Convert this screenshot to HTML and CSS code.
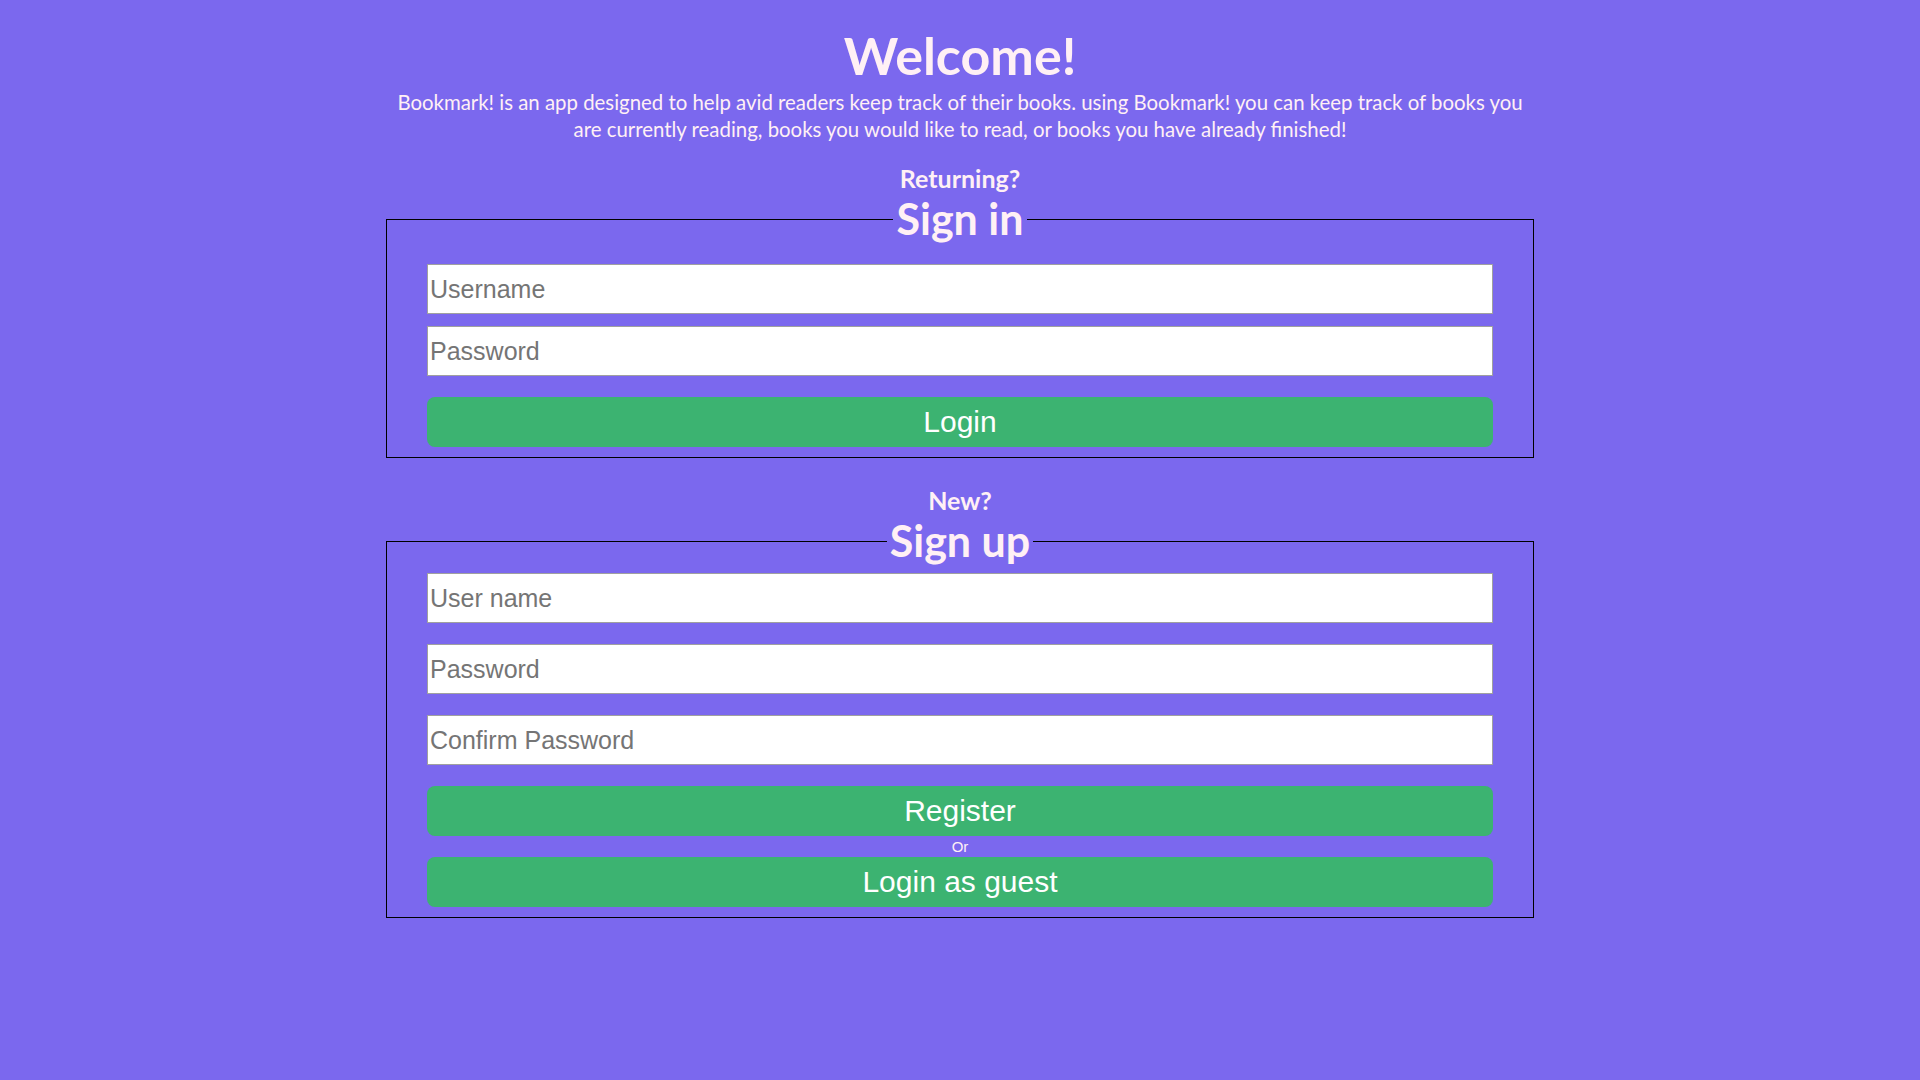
FILE: index.html
```html
<!DOCTYPE html>
<html lang="en">
<head>
<meta charset="utf-8">
<title>Bookmark! - Welcome</title>
<link rel="stylesheet" href="styles.css">
</head>
<body>
<main class="page">
  <h1 class="title">Welcome!</h1>
  <p class="intro">Bookmark! is an app designed to help avid readers keep track of their books. using Bookmark! you can keep track of books you are currently reading, books you would like to read, or books you have already finished!</p>

  <h3 class="prompt prompt-returning">Returning?</h3>
  <form class="panel panel-signin" onsubmit="return false;">
    <fieldset class="panel-box">
      <legend class="panel-legend">Sign in</legend>
      <input class="field field-signin" type="text" placeholder="Username">
      <input class="field field-signin" type="password" placeholder="Password">
      <button class="btn btn-login" type="submit">Login</button>
    </fieldset>
  </form>

  <h3 class="prompt prompt-new">New?</h3>
  <form class="panel panel-signup" onsubmit="return false;">
    <fieldset class="panel-box">
      <legend class="panel-legend">Sign up</legend>
      <input class="field field-signup" type="text" placeholder="User name">
      <input class="field field-signup" type="password" placeholder="Password">
      <input class="field field-signup" type="password" placeholder="Confirm Password">
      <button class="btn btn-register" type="submit">Register</button>
      <span class="or">Or</span>
      <button class="btn btn-guest" type="button">Login as guest</button>
    </fieldset>
  </form>
</main>
</body>
</html>
```

FILE: styles.css
```css
* { box-sizing: border-box; }

html, body {
  margin: 0;
  padding: 0;
  background: #7b68ee;
  min-height: 100%;
}

body {
  font-family: Lato, "Open Sans", sans-serif;
  color: #fff0f5;
}

.page {
  display: flex;
  flex-direction: column;
  align-items: center;
  padding-top: 22px;
}

.title {
  margin: 0;
  font-size: 52px;
  line-height: 67px;
  font-weight: 700;
}

.intro {
  width: 1148px;
  margin: 0;
  font-size: 20.4px;
  line-height: 27px;
  text-align: center;
}

.prompt {
  margin: 0;
  font-size: 25px;
  line-height: 27px;
  font-weight: 700;
}

.prompt-returning { margin-top: 22px; }
.prompt-new { margin-top: 29px; }

.panel {
  width: 1148px;
  margin-top: 3px;
}

.panel-box {
  margin: 0;
  border: 1px solid #000;
  padding: 0 40px 10px;
  display: flex;
  flex-direction: column;
  min-width: 0;
}

.panel-legend {
  margin: 0 auto;
  padding: 0 3px;
  font-size: 43px;
  line-height: 48px;
  font-weight: 700;
}

.field {
  display: block;
  width: 100%;
  height: 50px;
  padding: 1px 2px;
  border: 1px solid #a0a0a0;
  background: #fff;
  font-family: "Liberation Sans", Arial, sans-serif;
  font-size: 25px;
  color: #333;
  outline: none;
}

.field::placeholder { color: #757575; }

.panel-signin .field:first-of-type { margin-top: 21px; }
.field-signin + .field-signin { margin-top: 12px; }

.panel-signup .field:first-of-type { margin-top: 8px; }
.field-signup + .field-signup { margin-top: 21px; }

.btn {
  display: block;
  width: 100%;
  height: 50px;
  border: 0;
  border-radius: 8px;
  background: #3cb371;
  color: #fff;
  font-family: "Liberation Sans", Arial, sans-serif;
  font-size: 30px;
  cursor: pointer;
}

.btn-login { margin-top: 21px; }
.btn-register { margin-top: 21px; }

.or {
  display: block;
  text-align: center;
  font-family: "Liberation Sans", Arial, sans-serif;
  font-size: 15px;
  line-height: 21px;
}
```
